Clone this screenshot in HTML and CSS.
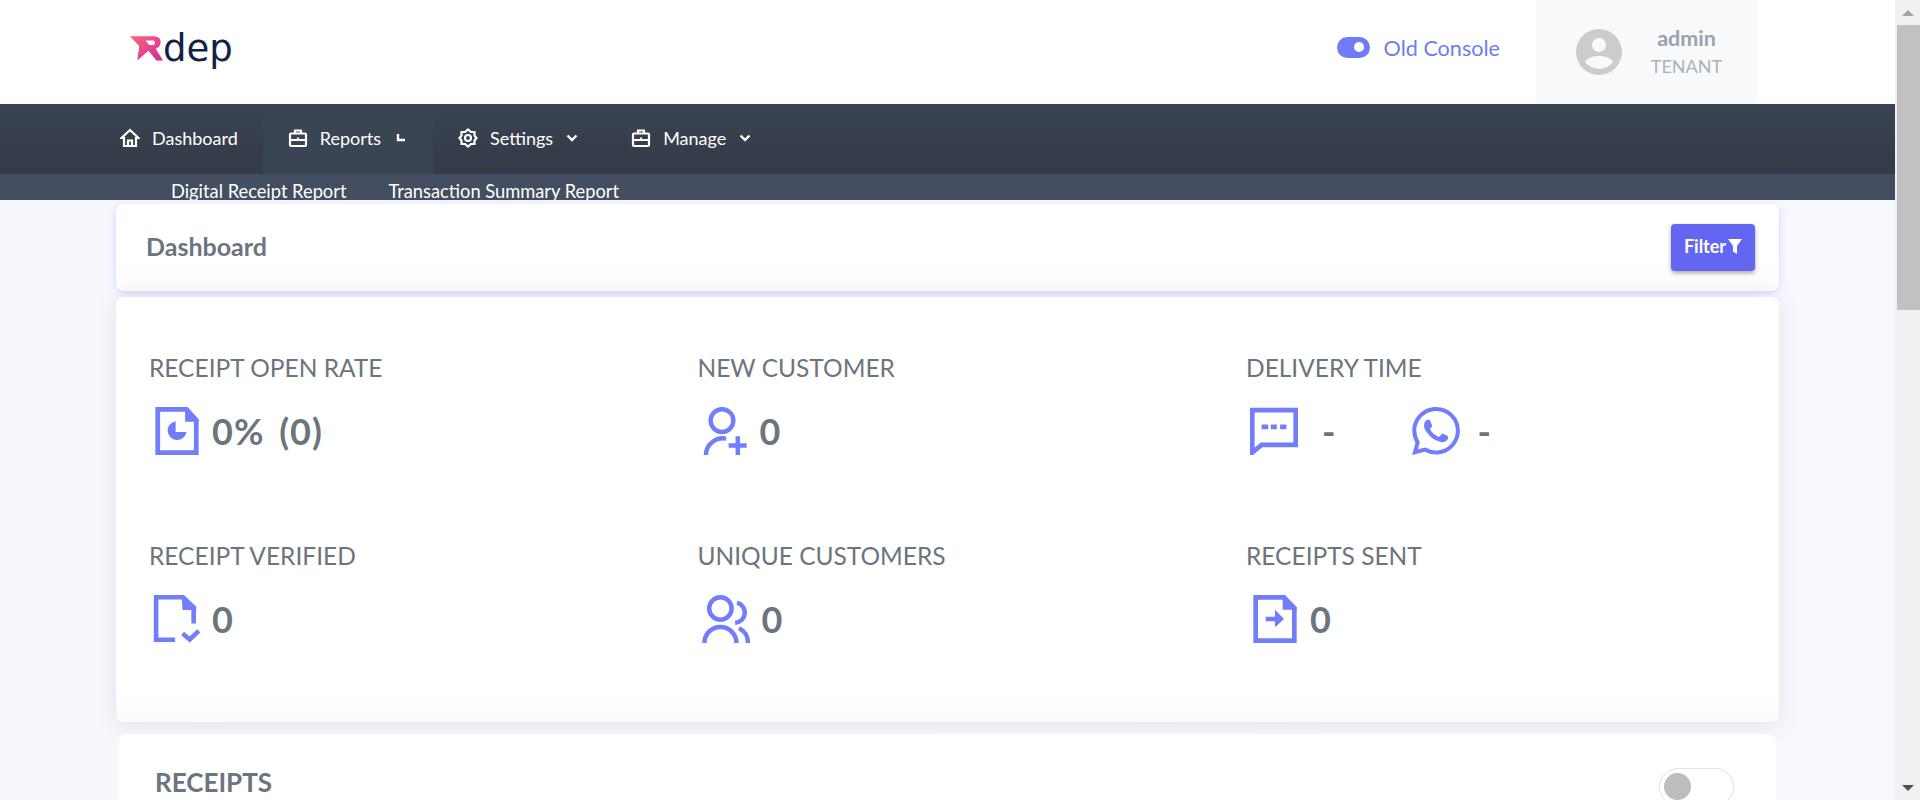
FILE: index.html
```html
<!DOCTYPE html>
<html lang="en">
<head>
    <meta charset="UTF-8">
    <meta name="viewport" content="width=device-width, initial-scale=1.0">
    <title>Rdep Dashboard</title>
    <link rel="stylesheet" href="styles.css">
</head>
<body>
    <div class="page">
        <header class="topbar">
            <a class="logo">
                <svg class="logo-mark" viewBox="0 0 100 75">
                    <defs>
                        <linearGradient id="logo-grad" x1="0" y1="0" x2="1" y2="1">
                            <stop offset="0" stop-color="#f9677a"/>
                            <stop offset="1" stop-color="#d52a9e"/>
                        </linearGradient>
                    </defs>
                    <path fill="url(#logo-grad)" d="M0 0H72C90 0 96 12 92 24C90 32 84 36 78 38L100 74H80L56 44L22 74L28 30Z"/>
                    <path fill="#fff" d="M47 13H70C77 13 77 27 70 27H58Z"/>
                </svg>
                <span class="logo-text">dep</span>
            </a>
            <div class="topbar-right">
                <label class="console-switch">
                    <span class="mini-toggle"><span class="mini-knob"></span></span>
                    <span class="console-label">Old Console</span>
                </label>
                <div class="user-panel">
                    <svg class="avatar" viewBox="0 0 46 46">
                        <circle cx="23" cy="23" r="23" fill="#ccc"/>
                        <circle cx="23" cy="16" r="7" fill="#f8f9fb"/>
                        <path fill="#f8f9fb" d="M9 33C13 25 33 25 37 33C30 42 16 42 9 33Z"/>
                    </svg>
                    <div class="user-info">
                        <span class="user-name">admin</span>
                        <span class="user-role">TENANT</span>
                    </div>
                </div>
            </div>
        </header>

        <nav class="mainnav">
            <a class="nav-item">
                <svg class="nav-icon" viewBox="0 0 20 20"><path d="M1.500 10L10 2L18.500 10H16V18H4V10ZM8 18V12.500H12V18"/></svg>
                Dashboard
            </a>
            <a class="nav-item active">
                <svg class="nav-icon" viewBox="0 0 20 20"><rect x="2" y="5.500" width="16" height="12.500" rx="1"/><path d="M7 5.500V2.500H13V5.500M2 12H18M10 9.500V11"/></svg>
                Reports
                <svg class="nav-caret" viewBox="0 0 10 10"><path d="M2 1V7H9"/></svg>
            </a>
            <a class="nav-item settings">
                <svg class="nav-icon" viewBox="0 0 20 20"><path d="M10 1.500L13 4H16.500V7.500L18.500 10L16.500 12.500V16H13L10 18.500L7 16H3.500V12.500L1.500 10L3.500 7.500V4H7Z"/><circle cx="10" cy="10" r="3"/></svg>
                Settings
                <svg class="nav-chevron" viewBox="0 0 12 8"><path d="M1.500 1.500L6 6L10.500 1.500"/></svg>
            </a>
            <a class="nav-item">
                <svg class="nav-icon" viewBox="0 0 20 20"><rect x="2" y="5.500" width="16" height="12.500" rx="1"/><path d="M7 5.500V2.500H13V5.500M2 12H18M10 9.500V11"/></svg>
                Manage
                <svg class="nav-chevron" viewBox="0 0 12 8"><path d="M1.500 1.500L6 6L10.500 1.500"/></svg>
            </a>
        </nav>

        <div class="subnav">
            <a class="subnav-item">Digital Receipt Report</a>
            <a class="subnav-item">Transaction Summary Report</a>
        </div>

        <main class="content">
            <section class="title-card">
                <h1 class="page-title">Dashboard</h1>
                <button class="filter-btn">Filter
                    <svg class="filter-icon" viewBox="0 0 14 15"><path d="M0 0H14L9 7V15L5 12.500V7Z"/></svg>
                </button>
            </section>

            <section class="stats-card">
                <div class="stat">
                    <h3 class="stat-label">RECEIPT OPEN RATE</h3>
                    <div class="stat-body">
                        <svg class="stat-icon icon-doc" viewBox="0 0 128 142">
                            <path class="line" d="M7 7H92L121 40V135H7Z"/>
                            <path class="solid" d="M88 0H94L128 36V44H88Z"/>
                            <path class="solid" d="M60 42A28 28 0 1 0 92 74H60Z"/>
                        </svg>
                        <span class="stat-value">0% (0)</span>
                    </div>
                </div>
                <div class="stat">
                    <h3 class="stat-label">NEW CUSTOMER</h3>
                    <div class="stat-body">
                        <svg class="stat-icon icon-add" viewBox="0 0 137 152">
                            <circle class="line" cx="59" cy="43" r="36"/>
                            <path class="line" d="M8 152A54 54 0 0 1 72 100M80 122H137M109 93V152"/>
                        </svg>
                        <span class="stat-value">0</span>
                    </div>
                </div>
                <div class="stat">
                    <h3 class="stat-label">DELIVERY TIME</h3>
                    <div class="stat-body">
                        <svg class="stat-icon icon-chat" viewBox="0 0 145 140">
                            <path class="line" d="M7 7H138V112H35L7 135Z"/>
                            <path class="solid" d="M35 50H55V65H35ZM63 50H81V65H63ZM91 50H110V65H91Z"/>
                        </svg>
                        <span class="stat-value dash">-</span>
                        <svg class="stat-icon icon-whatsapp" viewBox="0 0 24 24">
                            <path class="solid" d="M17.472 14.382c-.297-.149-1.758-.867-2.03-.967-.273-.099-.471-.148-.67.15-.197.297-.767.966-.94 1.164-.173.199-.347.223-.644.075-.297-.15-1.255-.463-2.39-1.475-.883-.788-1.48-1.761-1.653-2.059-.173-.297-.018-.458.13-.606.134-.133.298-.347.446-.52.149-.174.198-.298.298-.497.099-.198.05-.371-.025-.52-.075-.149-.669-1.612-.916-2.207-.242-.579-.487-.5-.669-.51-.173-.008-.371-.01-.57-.01-.198 0-.52.074-.792.372-.272.297-1.04 1.016-1.04 2.479 0 1.462 1.065 2.875 1.213 3.074.149.198 2.096 3.2 5.077 4.487.709.306 1.262.489 1.694.625.712.227 1.36.195 1.871.118.571-.085 1.758-.719 2.006-1.413.248-.694.248-1.289.173-1.413-.074-.124-.272-.198-.57-.347m-5.421 7.403h-.004a9.87 9.87 0 01-5.031-1.378l-.361-.214-3.741.982.998-3.648-.235-.374a9.86 9.86 0 01-1.51-5.26c.001-5.45 4.436-9.884 9.888-9.884 2.64 0 5.122 1.03 6.988 2.898a9.825 9.825 0 012.893 6.994c-.003 5.45-4.437 9.884-9.885 9.884m8.413-18.297A11.815 11.815 0 0012.05 0C5.495 0 .16 5.335.157 11.892c0 2.096.547 4.142 1.588 5.945L.057 24l6.305-1.654a11.882 11.882 0 005.683 1.448h.005c6.554 0 11.89-5.335 11.893-11.893a11.821 11.821 0 00-3.48-8.413Z"/>
                        </svg>
                        <span class="stat-value dash">-</span>
                    </div>
                </div>
                <div class="stat">
                    <h3 class="stat-label">RECEIPT VERIFIED</h3>
                    <div class="stat-body">
                        <svg class="stat-icon icon-check" viewBox="0 0 142 147">
                            <path class="line" d="M65 137H7V7H88L122 40V87"/>
                            <path class="solid" d="M85 0H92L130 36V46H88Z"/>
                            <path class="line" d="M88 118L110 136L138 110"/>
                        </svg>
                        <span class="stat-value">0</span>
                    </div>
                </div>
                <div class="stat">
                    <h3 class="stat-label">UNIQUE CUSTOMERS</h3>
                    <div class="stat-body">
                        <svg class="stat-icon icon-users" viewBox="0 0 151 150">
                            <circle class="line" cx="58" cy="42" r="35"/>
                            <path class="line" d="M8 150A50 50 0 0 1 108 150M110 24A32 32 0 0 1 104 87M116 104A48 48 0 0 1 144 150"/>
                        </svg>
                        <span class="stat-value">0</span>
                    </div>
                </div>
                <div class="stat">
                    <h3 class="stat-label">RECEIPTS SENT</h3>
                    <div class="stat-body">
                        <svg class="stat-icon icon-send" viewBox="0 0 130 144">
                            <path class="line" d="M7 7H92L123 40V137H7Z"/>
                            <path class="solid" d="M88 0H94L130 36V44H88Z"/>
                            <path class="solid" d="M37 65H65V44L92 72L65 97V79H37Z"/>
                        </svg>
                        <span class="stat-value">0</span>
                    </div>
                </div>
            </section>

            <section class="receipts-card">
                <h2 class="receipts-title">RECEIPTS</h2>
                <span class="big-toggle"><span class="big-knob"></span></span>
            </section>
        </main>
    </div>

    <div class="scrollbar">
        <span class="scroll-btn"><span class="arrow-up"></span></span>
        <div class="scroll-track"><div class="scroll-thumb"></div></div>
        <span class="scroll-btn"><span class="arrow-down"></span></span>
    </div>
</body>
</html>
```

FILE: styles.css
```css
* {
    box-sizing: border-box;
}
html, body {
    margin: 0;
    height: 100%;
    overflow: hidden;
}
body {
    display: flex;
    font-family: 'Lato', 'Noto Sans', sans-serif;
    color: #6c757d;
    background-color: #f8f9ff;
}
.page {
    flex: 1;
    min-width: 0;
    height: 800px;
    overflow: hidden;
}

/* top bar */
.topbar {
    height: 104px;
    background-color: #fff;
    display: flex;
    align-items: flex-start;
    justify-content: space-between;
    padding-left: 130px;
    padding-right: 137px;
}
.logo {
    display: flex;
    align-items: flex-start;
    margin-top: 36px;
}
.logo-mark {
    width: 33px;
    height: 25px;
}
.logo-text {
    font-family: 'DejaVu Sans', sans-serif;
    font-size: 37px;
    line-height: 32px;
    margin-top: -3px;
    color: #0f2348;
}
.topbar-right {
    display: flex;
    align-items: flex-start;
}
.console-switch {
    display: flex;
    align-items: center;
    margin-top: 34px;
    margin-right: 36px;
}
.mini-toggle {
    width: 33px;
    height: 21px;
    border-radius: 11px;
    background-color: #6f7bf7;
    display: flex;
    align-items: center;
    justify-content: flex-end;
    padding-right: 6px;
}
.mini-knob {
    width: 10px;
    height: 10px;
    border-radius: 50%;
    background-color: #fff;
}
.console-label {
    margin-left: 14px;
    font-size: 21.6px;
    color: #6f7bf7;
    position: relative;
    top: 1px;
}
.user-panel {
    width: 222px;
    height: 104px;
    background-color: #f8f9fb;
    border-radius: 0 0 6px 6px;
    display: flex;
    align-items: center;
    padding-left: 40px;
}
.avatar {
    width: 46px;
    height: 46px;
    flex: none;
}
.user-info {
    display: flex;
    flex-direction: column;
    align-items: center;
    margin-left: 29px;
    width: 71px;
}
.user-name {
    font-size: 21.5px;
    font-weight: 700;
    color: #97a3ad;
    line-height: 28px;
}
.user-role {
    font-size: 18px;
    color: #a9b3bb;
    line-height: 28px;
}

/* nav */
.mainnav {
    height: 70px;
    background: linear-gradient(#3b4452, #343a46);
    display: flex;
    padding-left: 95px;
}
.nav-item {
    display: flex;
    align-items: center;
    color: #fff;
    font-size: 18px;
    padding: 0 25px 2px;
}
.nav-item.active {
    background-color: #3a4452;
    padding-right: 27px;
}
.nav-item.settings {
    padding-right: 28px;
}
.nav-icon {
    width: 20px;
    height: 20px;
    margin-right: 12px;
    fill: none;
    stroke: #fff;
    stroke-width: 2.2;
}
.nav-caret {
    width: 10px;
    height: 10px;
    margin-left: 15px;
    fill: none;
    stroke: #fff;
    stroke-width: 2.4;
}
.nav-chevron {
    width: 12px;
    height: 8px;
    margin-left: 13px;
    fill: none;
    stroke: #fff;
    stroke-width: 2.4;
}
.subnav {
    height: 26px;
    background-color: #434f60;
    display: flex;
    padding-left: 171px;
    gap: 42px;
    overflow: hidden;
}
.subnav-item {
    color: #fff;
    font-size: 18.3px;
    line-height: 34px;
}

/* content */
.content {
    padding: 4px 116px 0;
    background: linear-gradient(90deg, #f7f8fe, #f8f9ff);
    height: 600px;
    overflow: hidden;
}
.title-card {
    height: 87px;
    width: 1663px;
    background: linear-gradient(#fff 60%, #fbfbfc);
    border-radius: 8px;
    box-shadow: 0 2px 8px rgba(99, 102, 241, .25);
    display: flex;
    align-items: center;
    justify-content: space-between;
    padding: 0 24px 0 30px;
}
.page-title {
    margin: 0 0 4px;
    font-size: 25px;
    font-weight: 700;
    color: #6c757d;
}
.filter-btn {
    width: 84px;
    height: 47px;
    border: none;
    border-radius: 4px;
    background-color: #6366f1;
    color: #fff;
    font-family: inherit;
    font-size: 18px;
    font-weight: 700;
    box-shadow: 0 2px 4px rgba(0, 0, 0, .35);
    display: flex;
    align-items: center;
    justify-content: center;
    padding: 0 0 3px;
    gap: 2px;
}
.filter-icon {
    width: 14px;
    height: 15px;
    fill: #fff;
}
.stats-card {
    margin-top: 6px;
    height: 425px;
    width: 1663px;
    background: linear-gradient(#fff 92%, #fbfbfc);
    border-radius: 8px;
    box-shadow: 0 4px 24px rgba(34, 41, 47, .1);
    display: grid;
    grid-template-columns: 548.5px 548.5px 1fr;
    grid-template-rows: 188px 188px;
    padding: 57px 0 0 33px;
}
.stat-label {
    margin: 0;
    font-size: 24.5px;
    font-weight: 400;
    line-height: 28px;
    color: #6c757d;
}
.stat-body {
    display: flex;
    align-items: center;
    height: 50px;
    margin-top: 24px;
    padding-left: 6px;
}
.stat-icon {
    flex: none;
    height: 48px;
    width: 44px;
}
.stat-icon .line {
    fill: none;
    stroke: #717dfb;
    stroke-width: 14;
}
.stat-icon .solid {
    fill: #717dfb;
}
.icon-check {
    width: 48px;
    margin-left: -2px;
}
.icon-add {
    margin-left: -1px;
}
.icon-users {
    width: 50px;
    margin-left: -3px;
}
.icon-chat {
    width: 48px;
    margin-left: -2px;
}
.icon-whatsapp {
    width: 48px;
    margin-left: 76px;
}
.icon-send {
    margin-left: 1px;
}
.stat-value {
    font-size: 36px;
    font-weight: 700;
    color: #6c757d;
    margin-left: 13px;
    letter-spacing: 1px;
    word-spacing: 5px;
}
.icon-users + .stat-value,
.icon-check + .stat-value {
    margin-left: 11px;
}
.stat-value.dash {
    margin-left: 24px;
}
.icon-whatsapp + .stat-value.dash {
    margin-left: 17px;
}
.receipts-card {
    margin: 12px 3px 0;
    height: 100px;
    background-color: #fff;
    border-radius: 8px 8px 0 0;
    display: flex;
    justify-content: space-between;
    align-items: flex-start;
    padding: 34px 42px 0 36px;
}
.receipts-title {
    margin: 0;
    font-size: 26px;
    line-height: 28px;
    font-weight: 700;
    color: #6c757d;
}
.big-toggle {
    width: 75px;
    height: 38px;
    border: 1px solid #e2e2e2;
    border-radius: 19px;
    padding: 4px;
}
.big-knob {
    display: block;
    width: 27px;
    height: 27px;
    border-radius: 50%;
    background-color: #bdbdbd;
}

/* scrollbar, drawn since the page itself is cut at the window */
.scrollbar {
    width: 25px;
    flex: none;
    height: 800px;
    background-color: #f1f1f1;
    display: flex;
    flex-direction: column;
}
.scroll-btn {
    height: 25px;
    flex: none;
    display: flex;
    align-items: center;
    justify-content: center;
}
.arrow-up {
    border-left: 6px solid transparent;
    border-right: 6px solid transparent;
    border-bottom: 6px solid #a3a3a3;
}
.arrow-down {
    border-left: 6px solid transparent;
    border-right: 6px solid transparent;
    border-top: 6px solid #505050;
}
.scroll-track {
    flex: 1;
    padding-left: 2px;
}
.scroll-thumb {
    height: 285px;
    background-color: #c1c1c1;
}
```
